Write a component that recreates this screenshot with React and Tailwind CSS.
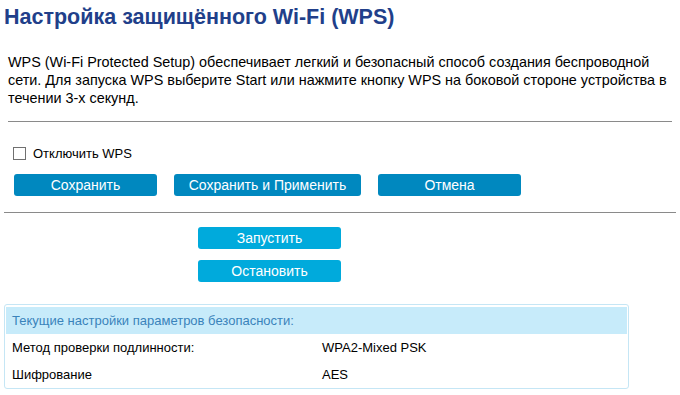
import { useState } from "react";

const Btn = ({ label, w, light }) => (
    <button
        className={`h-[22px] ${w} rounded-[3px] text-[14px] leading-[22px] text-white ${light ? "bg-[#00aadc]" : "bg-[#0088bf]"}`}
    >
        {label}
    </button>
);

export default function App() {
    const [off, setOff] = useState(false);

    return (
        <div className="w-[680px] h-[395px] overflow-hidden bg-white text-black font-['Liberation_Sans',Arial,sans-serif]">
            <h1 className="pt-[5px] pl-[4px] text-[21.5px] leading-[24px] font-bold text-[#213f8a]">
                Настройка защищённого Wi-Fi (WPS)
            </h1>

            <div className="px-1">
                <div className="px-1">
                    <p className="mt-[24px] text-[14.4px] leading-[18px] whitespace-nowrap">
                        WPS (Wi-Fi Protected Setup) обеспечивает легкий и безопасный способ создания беспроводной
                        <br />
                        сети. Для запуска WPS выберите Start или нажмите кнопку WPS на боковой стороне устройства в
                        <br />
                        течении 3-х секунд.
                    </p>
                    <hr className="mt-[14px] border-0 border-t border-[#8a8a8a]" />

                    <label className="mt-[25px] ml-[5px] flex items-center gap-[7px] text-[13px] leading-[13px]">
                        <input
                            type="checkbox"
                            checked={off}
                            onChange={() => setOff(!off)}
                            className="appearance-none w-[13px] h-[13px] border border-[#707070] bg-white checked:bg-[#0088bf]"
                        />
                        <span>Отключить WPS</span>
                    </label>

                    <div className="mt-[14px] ml-[6px] flex gap-[17px]">
                        <Btn label="Сохранить" w="w-[143px]" />
                        <Btn label="Сохранить и Применить" w="w-[187px]" />
                        <Btn label="Отмена" w="w-[143px]" />
                    </div>
                </div>

                <hr className="mt-[16px] border-0 border-t border-[#8a8a8a]" />

                <div className="mt-[14px] ml-[194px] flex flex-col gap-[11px]">
                    <Btn label="Запустить" w="w-[143px]" light />
                    <Btn label="Остановить" w="w-[143px]" light />
                </div>

                {/* Current security settings */}
                <div className="mt-[22px] w-[625px] rounded-[3px] border border-[#c5e6f5] pt-[2px] px-[1px] text-[13px]">
                    <div className="h-[27px] pl-[6px] flex items-center bg-[#c7ebfa] text-[#3a83bb]">
                        Текущие настройки параметров безопасности:
                    </div>
                    <div className="h-[27px] pl-[6px] flex items-center">
                        <span className="w-[310px]">Метод проверки подлинности:</span>
                        <span>WPA2-Mixed PSK</span>
                    </div>
                    <div className="h-[27px] pl-[6px] flex items-center">
                        <span className="w-[310px]">Шифрование</span>
                        <span>AES</span>
                    </div>
                </div>
            </div>
        </div>
    );
}
